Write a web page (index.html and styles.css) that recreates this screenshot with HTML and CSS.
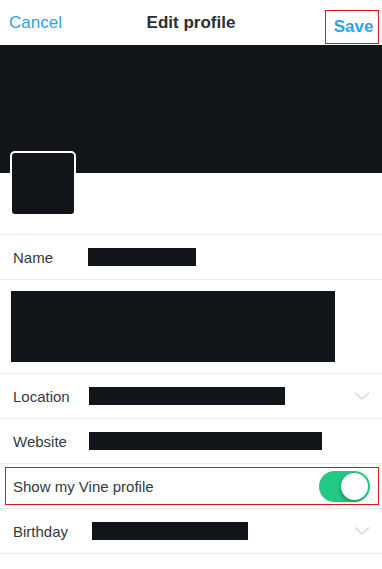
FILE: index.html
```html
<!DOCTYPE html>
<html>
  <head>
    <title>Edit profile</title>
    <link rel="stylesheet" href="styles.css">
  </head>
  <body>
    <div class="top-bar">
      <span class="cancel-button">Cancel</span>
      <span class="title">Edit profile</span>
      <span class="save-box"><span class="save-button">Save</span></span>
    </div>

    <div class="banner"></div>

    <div class="avatar-area">
      <div class="avatar"></div>
    </div>

    <div class="row">
      <span class="label">Name</span>
      <span class="hidden-value name-value"></span>
    </div>

    <div class="row bio-row">
      <span class="hidden-value bio-value"></span>
    </div>

    <div class="row">
      <span class="label">Location</span>
      <span class="hidden-value location-value"></span>
      <svg class="chevron" width="16" height="10" viewBox="0 0 16 10">
        <path d="M1 1.5 L8 8 L15 1.5" fill="none" stroke="#d3dadf" stroke-width="1.6"/>
      </svg>
    </div>

    <div class="row">
      <span class="label">Website</span>
      <span class="hidden-value website-value"></span>
    </div>

    <div class="row vine-row">
      <div class="vine-box">
        <span class="label">Show my Vine profile</span>
        <span class="switch"><span class="switch-knob"></span></span>
      </div>
    </div>

    <div class="row">
      <span class="label">Birthday</span>
      <span class="hidden-value birthday-value"></span>
      <svg class="chevron" width="16" height="10" viewBox="0 0 16 10">
        <path d="M1 1.5 L8 8 L15 1.5" fill="none" stroke="#d3dadf" stroke-width="1.6"/>
      </svg>
    </div>
  </body>
</html>
```

FILE: styles.css
```css
body {
  margin: 0;
  background-color: white;
  font-family: "Liberation Sans", Arial, sans-serif;
  color: #333a3f;
}

.top-bar {
  height: 45px;
  display: flex;
  align-items: center;
  justify-content: space-between;
  padding: 0 3px 0 9px;
  position: relative;
}

.cancel-button {
  font-size: 17px;
  color: #2aa3ef;
}

.title {
  position: absolute;
  left: 0;
  right: 0;
  text-align: center;
  font-size: 17px;
  font-weight: bold;
  color: #292f33;
}

.save-box {
  display: flex;
  align-items: center;
  justify-content: center;
  width: 52px;
  height: 32px;
  border: 1px solid #e0141e;
  margin-top: 8px;
  position: relative;
  z-index: 1;
}

.save-button {
  font-size: 17px;
  font-weight: bold;
  color: #2aa3ef;
  margin-left: 3px;
}

.banner {
  height: 128px;
  background-color: #111519;
}

.avatar-area {
  border-bottom: 1px solid #e6ecf0;
  padding: 0 0 18px 10px;
}

.avatar {
  position: relative;
  margin-top: -22px;
  width: 62px;
  height: 61px;
  background-color: #111519;
  border: 2px solid white;
  border-radius: 5px;
}

.row {
  display: flex;
  align-items: center;
  height: 44px;
  padding-left: 13px;
  border-bottom: 1px solid #e6ecf0;
}

.label {
  font-size: 15px;
  width: 76px;
  flex-shrink: 0;
}

.hidden-value {
  display: block;
  height: 18px;
  background-color: #111519;
}

.name-value {
  width: 108px;
  margin-left: -1px;
}

.location-value {
  width: 196px;
}

.website-value {
  width: 233px;
}

.birthday-value {
  width: 156px;
  margin-left: 3px;
}

.bio-row {
  height: 71px;
  padding: 11px 0 11px 11px;
}

.bio-value {
  width: 324px;
  height: 71px;
}

.chevron {
  margin-left: auto;
  margin-right: 12px;
}

.vine-row {
  padding: 3px 3px 3px 5px;
  height: 38px;
}

.vine-box {
  flex: 1;
  height: 36px;
  display: flex;
  align-items: center;
  justify-content: space-between;
  padding: 0 8px 0 7px;
  border: 1px solid #e0141e;
}

.vine-box .label {
  width: auto;
}

.switch {
  width: 51px;
  height: 31px;
  border-radius: 16px;
  background-color: #21c983;
  display: flex;
  align-items: center;
  justify-content: flex-end;
  padding-right: 2px;
  box-sizing: border-box;
}

.switch-knob {
  width: 27px;
  height: 27px;
  border-radius: 50%;
  background-color: white;
  box-shadow: -1px 2px 3px rgba(0, 0, 0, 0.25);
}
```
